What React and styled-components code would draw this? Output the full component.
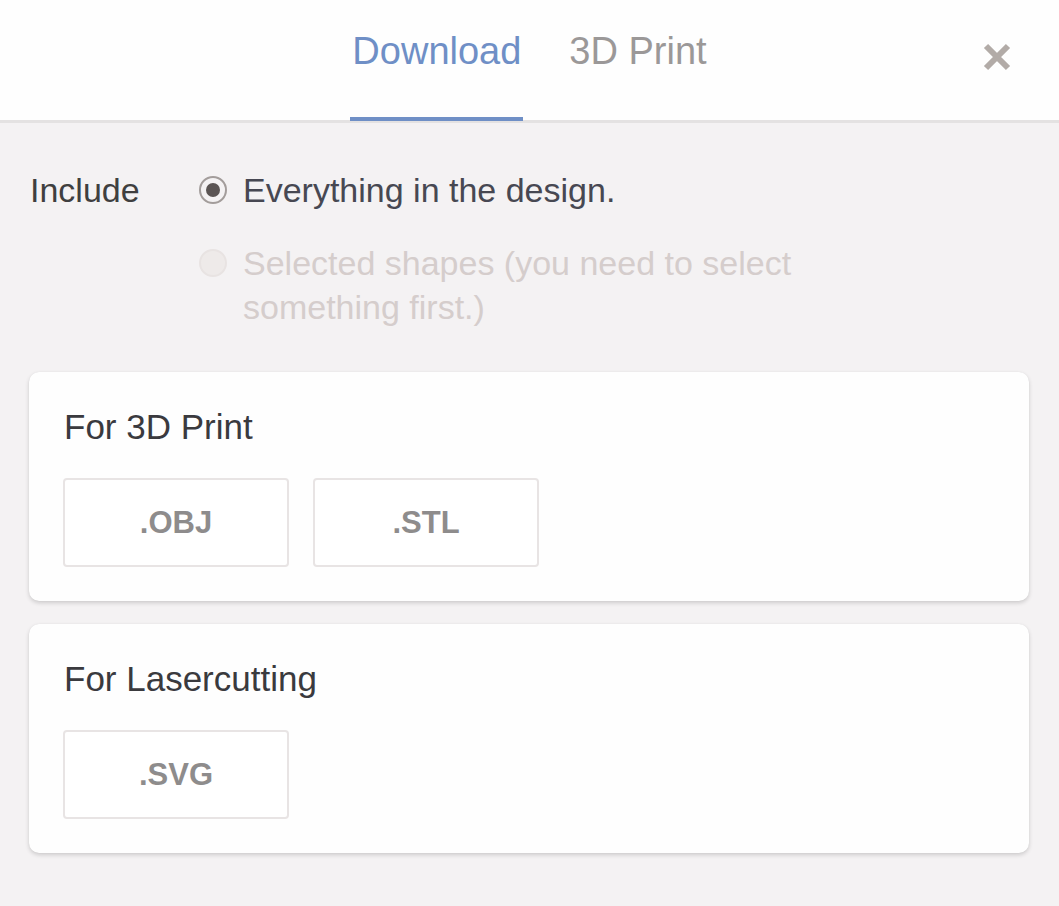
import React, { useState } from 'react';
import styled, { createGlobalStyle, css } from 'styled-components';

const GlobalStyle = createGlobalStyle`
  html, body {
    margin: 0;
    padding: 0;
    background: #f4f2f3;
    font-family: "Liberation Sans", Arial, sans-serif;
  }
  * { box-sizing: border-box; }
`;

const Panel = styled.div`
  width: 1059px;
  min-height: 906px;
  background: #f4f2f3;
`;

const Header = styled.div`
  position: relative;
  height: 123px;
  background: #fefefe;
  border-bottom: 3px solid #e4e2e2;
  display: flex;
  justify-content: center;
  gap: 44px;
`;

const Tab = styled.button`
  position: relative;
  height: 121px;
  padding: 29px 2px 0;
  border: 0;
  background: none;
  font-family: inherit;
  font-size: 38px;
  line-height: 44px;
  color: ${p => (p.$active ? '#6f8fc6' : '#9b9898')};
  cursor: pointer;
  display: flex;
  align-items: flex-start;

  ${p =>
    p.$active &&
    css`
      &::after {
        content: '';
        position: absolute;
        left: 0;
        right: 0;
        bottom: 0;
        height: 4px;
        background: #6f8fc6;
      }
    `}
`;

const Close = styled.button`
  position: absolute;
  top: 43px;
  right: 48px;
  width: 28px;
  height: 28px;
  padding: 0;
  border: 0;
  background: none;
  cursor: pointer;
  display: flex;
`;

const Body = styled.div`
  padding: 45px 30px 40px 29px;
`;

const IncludeRow = styled.div`
  display: flex;
  align-items: flex-start;
`;

const IncludeLabel = styled.div`
  width: 170px;
  padding-left: 1px;
  font-size: 34px;
  line-height: 44px;
  color: #3f3f3f;
`;

const Options = styled.div`
  display: flex;
  flex-direction: column;
  gap: 29px;
`;

const Option = styled.label`
  display: flex;
  align-items: flex-start;
  gap: 16px;
  font-size: 34px;
  line-height: 44px;
  width: 610px;
  color: ${p => (p.$disabled ? '#d5cdcc' : '#474852')};
  cursor: ${p => (p.$disabled ? 'default' : 'pointer')};
`;

const Radio = styled.span`
  flex: none;
  width: 28px;
  height: 28px;
  margin-top: 8px;
  border-radius: 50%;
  border: 2px solid ${p => (p.$disabled ? '#e8e3e2' : '#a39d9b')};
  background: ${p => (p.$disabled ? '#eeeae9' : '#f4f2f3')};
  display: flex;
  align-items: center;
  justify-content: center;

  &::after {
    content: '';
    width: 14px;
    height: 14px;
    border-radius: 50%;
    background: ${p => (p.$checked ? '#5b5554' : 'transparent')};
  }
`;

const Cards = styled.div`
  margin-top: 43px;
  display: flex;
  flex-direction: column;
  gap: 23px;
`;

const Card = styled.section`
  width: 1000px;
  background: #fefefe;
  border-radius: 10px;
  padding: 35px 34px 34px 34px;
  box-shadow: 0 2px 4px rgba(0, 0, 0, 0.16), 0 0 1px rgba(0, 0, 0, 0.08);
`;

const CardTitle = styled.h3`
  margin: 0 0 31px 1px;
  font-size: 35px;
  line-height: 40px;
  font-weight: 400;
  color: #3a3a3e;
`;

const Formats = styled.div`
  display: flex;
  gap: 24px;
`;

const FormatButton = styled.button`
  width: 226px;
  height: 89px;
  border: 2px solid #e8e4e4;
  border-radius: 4px;
  background: #fff;
  font-family: inherit;
  font-size: 31px;
  font-weight: 700;
  color: #8e8c8c;
  cursor: pointer;
`;

const groups = [
  { title: 'For 3D Print', formats: ['.OBJ', '.STL'] },
  { title: 'For Lasercutting', formats: ['.SVG'] },
];

export default function App() {
  const [tab, setTab] = useState('download');

  return (
    <>
      <GlobalStyle />
      <Panel>
        <Header>
          <Tab $active={tab === 'download'} onClick={() => setTab('download')}>
            Download
          </Tab>
          <Tab $active={tab === 'print'} onClick={() => setTab('print')}>
            3D Print
          </Tab>
          <Close aria-label="Close">
            <svg width="28" height="28" viewBox="0 0 28 28">
              <path d="M3 3 L25 25 M25 3 L3 25" stroke="#b2aba7" strokeWidth="6" />
            </svg>
          </Close>
        </Header>
        <Body>
          <IncludeRow>
            <IncludeLabel>Include</IncludeLabel>
            <Options>
              <Option>
                <Radio $checked />
                <span>Everything in the design.</span>
              </Option>
              <Option $disabled>
                <Radio $disabled />
                <span>Selected shapes (you need to select something first.)</span>
              </Option>
            </Options>
          </IncludeRow>
          <Cards>
            {groups.map(g => (
              <Card key={g.title}>
                <CardTitle>{g.title}</CardTitle>
                <Formats>
                  {g.formats.map(f => (
                    <FormatButton key={f}>{f}</FormatButton>
                  ))}
                </Formats>
              </Card>
            ))}
          </Cards>
        </Body>
      </Panel>
    </>
  );
}
